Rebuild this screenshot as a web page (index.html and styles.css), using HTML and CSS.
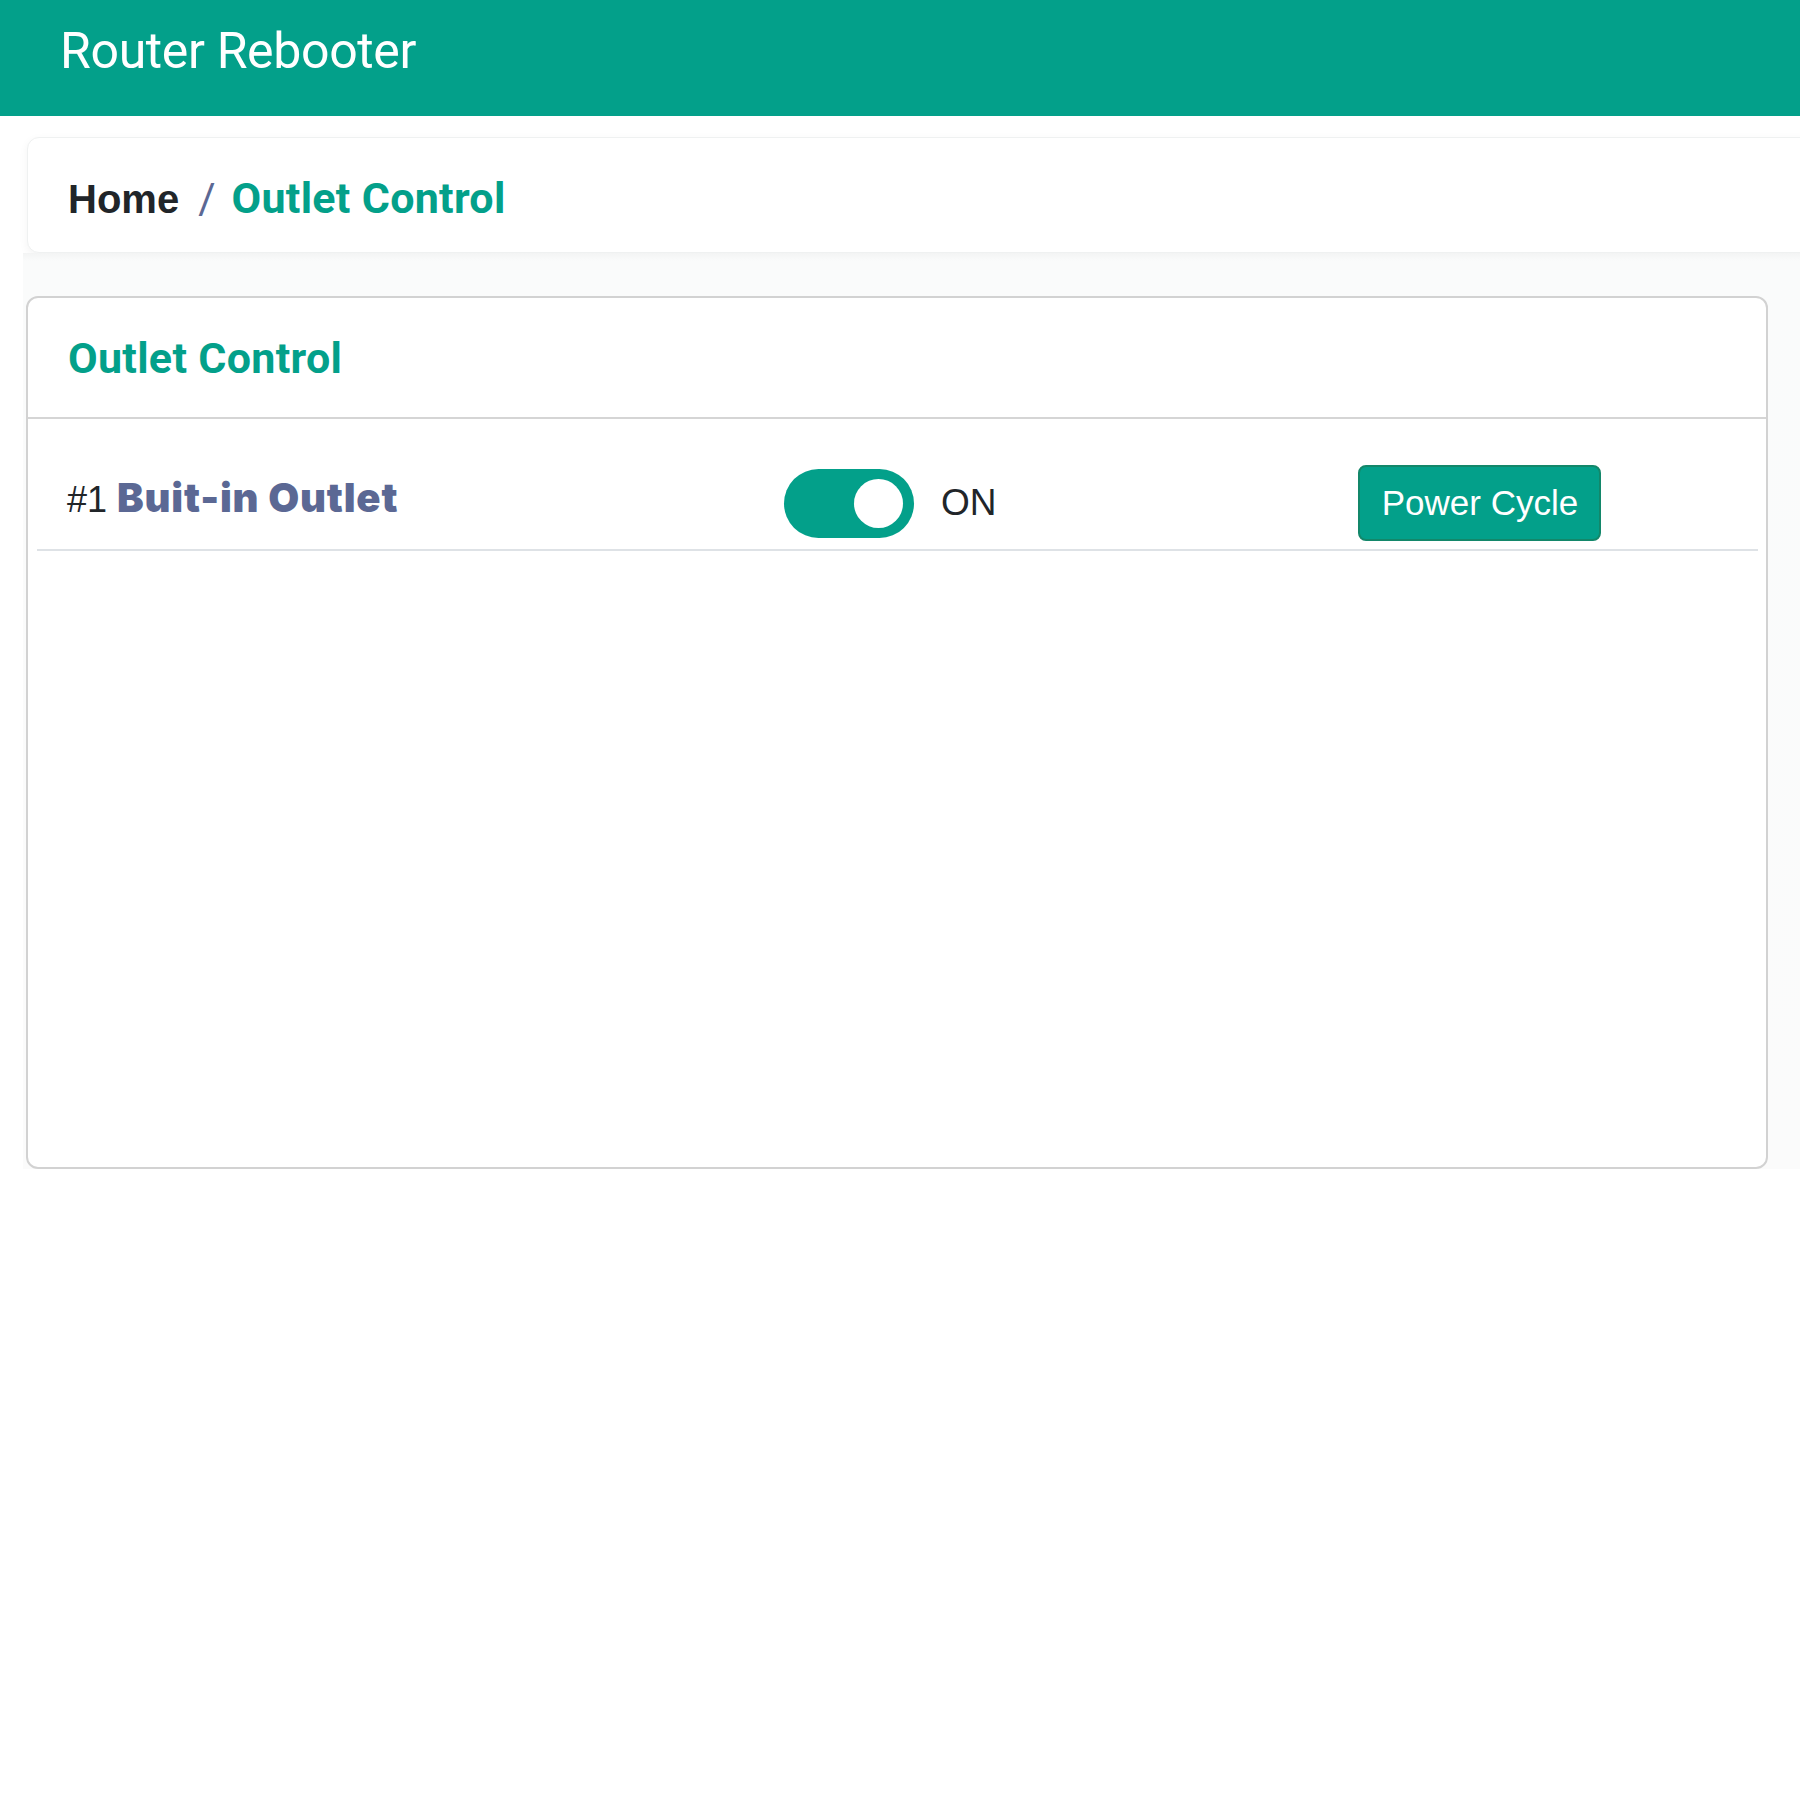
FILE: index.html
```html
<!DOCTYPE html>
<html lang="en">
<head>
<meta charset="utf-8">
<title>Router Rebooter</title>
<link rel="stylesheet" href="styles.css">
</head>
<body>
<header class="topbar">
  <h1 class="brand">Router Rebooter</h1>
</header>
<nav class="crumbs">
  <span class="crumb-home">Home</span><span class="crumb-sep">/</span><span class="crumb-current">Outlet Control</span>
</nav>
<main class="content">
  <section class="panel">
    <div class="panel-head">
      <h2 class="panel-title">Outlet Control</h2>
    </div>
    <div class="panel-body">
      <div class="outlet-row">
        <div class="cell cell-name"><span class="num">#1</span> <span class="outlet-name">Buit-in Outlet</span></div>
        <div class="cell cell-switch">
          <div class="toggle"><div class="knob"></div></div>
          <span class="state">ON</span>
        </div>
        <div class="cell cell-action">
          <button class="btn-cycle" type="button">Power Cycle</button>
        </div>
      </div>
    </div>
  </section>
</main>
</body>
</html>
```
FILE: styles.css
```css
html, body {
  margin: 0;
  padding: 0;
  background: #ffffff;
  overflow-x: hidden;
}
body {
  font-family: "Liberation Sans", Arial, sans-serif;
  color: #212529;
}
.topbar {
  height: 116px;
  box-sizing: border-box;
  background: #03a08a;
  padding: 26px 0 0 60px;
}
.brand {
  margin: 0;
  font-family: Roboto, "Liberation Sans", sans-serif;
  font-weight: 400;
  font-size: 50px;
  line-height: 50px;
  letter-spacing: -0.35px;
  color: #ffffff;
}
.crumbs {
  margin: 21px 0 0 27px;
  width: calc(100% + 20px);
  height: 116px;
  box-sizing: border-box;
  padding: 35px 0 0 40px;
  line-height: 50px;
  background: #ffffff;
  border: 1px solid #eff1f1;
  border-radius: 12px;
  box-shadow: 0 3px 10px rgba(0, 0, 0, 0.05);
}
.crumb-home {
  font-family: "Liberation Sans", Arial, sans-serif;
  font-weight: 700;
  font-size: 40px;
  color: #212529;
}
.crumb-sep {
  font-family: Roboto, sans-serif;
  font-size: 42px;
  color: #5b6894;
  margin: 0 16px 0 19px;
}
.crumb-current {
  font-family: Roboto, sans-serif;
  font-weight: 700;
  font-size: 43px;
  letter-spacing: 0.3px;
  color: #03a08a;
}
.content {
  margin-left: 23px;
  background: linear-gradient(#f3f4f4, #fafbfb 8px, #fbfbfb);
  padding: 43px 32px 0 3px;
}
.panel {
  height: 873px;
  box-sizing: border-box;
  background: #ffffff;
  border: 2px solid #d2d2d2;
  border-radius: 12px;
}
.panel-head {
  padding: 35px 0 34px 40px;
  border-bottom: 2px solid #d5d5d5;
}
.panel-title {
  margin: 0;
  font-family: Roboto, sans-serif;
  font-weight: 700;
  font-size: 43px;
  letter-spacing: 0.3px;
  line-height: 50px;
  color: #03a08a;
}
.panel-body {
  padding: 0 8px 0 9px;
}
.outlet-row {
  display: grid;
  grid-template-columns: 5fr 4fr 3fr;
  align-items: center;
  padding: 46px 0 8px;
  border-bottom: 2px solid #dee2e6;
}
.cell {
  padding: 0 30px;
}
.cell-name {
  padding-bottom: 9px;
  font-size: 36px;
  line-height: 44px;
  white-space: nowrap;
}
.num {
  font-family: "Liberation Sans", Arial, sans-serif;
  color: #212529;
}
.outlet-name {
  font-family: Inter, sans-serif;
  font-weight: 900;
  font-size: 40px;
  color: #5b6894;
  letter-spacing: 0.8px;
}
.cell-switch {
  display: flex;
  align-items: center;
}
.toggle {
  width: 130px;
  height: 69px;
  border-radius: 35px;
  background: #03a08a;
  display: flex;
  align-items: center;
  justify-content: flex-end;
  padding: 0 11px;
  box-sizing: border-box;
}
.knob {
  width: 49px;
  height: 49px;
  border-radius: 50%;
  background: #ffffff;
}
.state {
  margin-left: 27px;
  font-size: 37px;
  color: #212529;
}
.btn-cycle {
  height: 76px;
  padding: 0 21px 0 22px;
  background: #03a08a;
  border: 2px solid #13876a;
  border-radius: 8px;
  color: #ffffff;
  font-family: "Liberation Sans", Arial, sans-serif;
  font-size: 35px;
  line-height: 72px;
}
```
